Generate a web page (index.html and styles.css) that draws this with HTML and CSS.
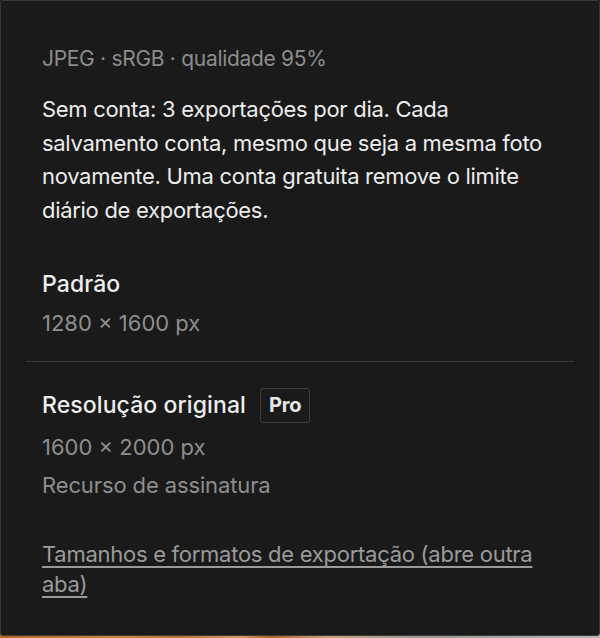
FILE: index.html
```html
<!DOCTYPE html>
<html lang="pt">
<head>
<meta charset="utf-8">
<link rel="stylesheet" href="styles.css">
</head>
<body>
<div class="backdrop"></div>
<section class="panel">
  <div class="block intro">
    <p class="meta">JPEG · sRGB · qualidade 95%</p>
    <p class="note">Sem conta: 3 exportações por dia. Cada salvamento conta, mesmo que seja a mesma foto novamente. Uma conta gratuita remove o limite diário de exportações.</p>
  </div>
  <div class="block option">
    <h3 class="opt-title">Padrão</h3>
    <p class="opt-size">1280 × 1600 px</p>
  </div>
  <hr class="divider">
  <div class="block option">
    <h3 class="opt-title">Resolução original <span class="badge">Pro</span></h3>
    <p class="opt-size second">1600 × 2000 px</p>
    <p class="opt-sub">Recurso de assinatura</p>
  </div>
  <div class="block footer">
    <a class="link" href="#">Tamanhos e formatos de exportação (abre outra aba)</a>
  </div>
</section>
</body>
</html>
```
FILE: styles.css
```css
html, body {
  margin: 0;
  padding: 0;
  width: 600px;
  height: 638px;
  overflow: hidden;
}
body {
  position: relative;
  font-family: Inter, "Noto Sans", sans-serif;
  background: #1a1a1a;
}
.backdrop {
  position: absolute;
  left: 0; right: 0; bottom: 0;
  height: 6px;
  background: linear-gradient(90deg, #b8651c 0%, #c98537 20%, #b8742f 30%, #d09a5e 40%, #b0621f 45%, #c8a27a 55%, #a59a90 65%, #9e9a96 75%, #b4b4b4 100%);
}
.panel {
  position: relative;
  box-sizing: border-box;
  height: 636px;
  background: #1a1a1a;
  border: 1px solid #383838;
  border-radius: 3px;
  padding: 0 25px;
}
.block {
  padding: 0 16px;
}
.intro {
  padding-top: 44px;
}
p, h3 { margin: 0; }
.meta {
  font-size: 21px;
  line-height: 28px;
  color: #8c8c8c;
  letter-spacing: -0.3px;
}
.note {
  margin-top: 20px;
  font-size: 22px;
  line-height: 33.5px;
  color: #ececec;
  letter-spacing: -0.3px;
}
.intro + .option { margin-top: 40px; }
.opt-title {
  display: flex;
  align-items: center;
  gap: 14px;
  font-size: 23px;
  font-weight: 500;
  line-height: 34px;
  color: #ededed;
  letter-spacing: 0.1px;
}
.opt-size {
  margin-top: 7px;
  font-size: 22px;
  line-height: 30px;
  color: #8e8e8e;
}
.opt-size.second { margin-top: 9px; }
.opt-sub {
  margin-top: 8px;
  font-size: 22px;
  line-height: 30px;
  color: #8e8e8e;
  letter-spacing: -0.12px;
}
.divider {
  border: 0;
  border-top: 1px solid #3c3c3c;
  margin: 23px 0 26px;
}
.divider + .option .opt-title { line-height: 35px; }
.badge {
  display: inline-block;
  box-sizing: border-box;
  height: 35px;
  padding: 0 8px;
  border: 1px solid #3e3e3e;
  border-radius: 3px;
  font-size: 20px;
  font-weight: 700;
  line-height: 33px;
  color: #e8e8e8;
  letter-spacing: -0.2px;
}
.footer { margin-top: 39px; }
.link {
  font-size: 22px;
  line-height: 30px;
  color: #9a9a9a;
  letter-spacing: -0.27px;
  text-decoration: underline;
  text-decoration-thickness: 1.5px;
  text-underline-offset: 4px;
}
```
